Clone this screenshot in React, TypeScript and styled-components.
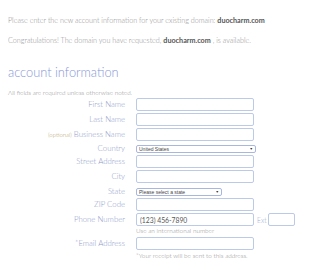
import React from "react";
import styled, { createGlobalStyle } from "styled-components";

const Global = createGlobalStyle`
  html, body { margin: 0; padding: 0; background: #ffffff; }
  body {
    font-family: Lato, "Noto Sans", sans-serif;
    -webkit-font-smoothing: antialiased;
  }
`;

const Page = styled.div`
  width: 320px;
  height: 269px;
  overflow: hidden;
  padding: 16px 0 0 8px;
  box-sizing: border-box;
`;

const Intro = styled.p`
  margin: 0 0 11px 0;
  font-size: 7.2px;
  font-weight: 300;
  line-height: 9px;
  color: #8f8f8f;
  white-space: nowrap;
  b { color: #555; font-weight: 700; }
`;

const Heading = styled.h2`
  margin: 19px 0 9px 0;
  font-weight: 300;
  font-size: 12.8px;
  line-height: 16px;
  color: #8797d8;
`;

const Note = styled.div`
  font-size: 6.35px;
  font-weight: 300;
  line-height: 7px;
  color: #8f8f8f;
  margin-bottom: 1px;
  white-space: nowrap;
`;

const Row = styled.div<{ $top?: number }>`
  display: flex;
  align-items: center;
  margin-top: ${(p) => p.$top ?? 2}px;
`;

const Label = styled.label`
  width: 117px;
  margin-right: 11px;
  text-align: right;
  font-size: 7.8px;
  font-weight: 300;
  line-height: 9px;
  color: #8e9cc9;
  white-space: nowrap;
`;

const Optional = styled.span`
  font-size: 6px;
  color: #b3a064;
  margin-right: 2px;
`;

const Input = styled.input<{ $w?: number }>`
  box-sizing: border-box;
  width: ${(p) => p.$w ?? 118}px;
  height: 13px;
  border: 1px solid #bccae8;
  border-radius: 2px;
  padding: 0 3px;
  margin: 0;
  font-family: Lato, sans-serif;
  font-size: 6.8px;
  color: #555;
  background: #fff;
  outline: none;
`;

const SelectWrap = styled.span<{ $w: number }>`
  position: relative;
  display: block;
  width: ${(p) => p.$w}px;
  height: 8px;
`;

const Select = styled.select`
  appearance: none;
  display: block;
  box-sizing: border-box;
  width: 100%;
  height: 8px;
  min-height: 0;
  border: 1px solid #a9b7de;
  border-radius: 2px;
  padding: 0 0 0 2px;
  margin: 0;
  font-family: "Liberation Sans", Arial, sans-serif;
  font-size: 5px;
  line-height: 6px;
  color: #444;
  background: #fff;
  outline: none;
`;

const Arrow = styled.span`
  position: absolute;
  right: 3px;
  top: 0;
  font-size: 3.5px;
  line-height: 8px;
  color: #333;
  pointer-events: none;
`;

const Ext = styled.span`
  margin: 0 2px 0 3px;
  font-size: 6.8px;
  font-weight: 300;
  color: #a0acd0;
`;

const Hint = styled.div<{ $top?: number }>`
  margin: ${(p) => p.$top ?? 1}px 0 0 128px;
  font-size: 6.4px;
  font-weight: 300;
  line-height: 8px;
  color: #8f8f8f;
  white-space: nowrap;
`;

function Field({ label, optional }: { label: string; optional?: boolean }) {
  return (
    <Row>
      <Label>
        {optional && <Optional>(optional)</Optional>}
        {label}
      </Label>
      <Input />
    </Row>
  );
}

export default function App() {
  return (
    <Page>
      <Global />
      <Intro>
        Please enter the new account information for your existing domain: <b>duocharm.com</b>
      </Intro>
      <Intro>
        Congratulations! The domain you have requested, <b>duocharm.com</b> , is available.
      </Intro>
      <Heading>account information</Heading>
      <Note>All fields are required unless otherwise noted.</Note>
      <Field label="First Name" />
      <Field label="Last Name" />
      <Field label="Business Name" optional />
      <Row $top={3}>
        <Label>Country</Label>
        <SelectWrap $w={120}>
          <Select defaultValue="US">
            <option value="US">United States</option>
          </Select>
          <Arrow>▼</Arrow>
        </SelectWrap>
      </Row>
      <Field label="Street Address" />
      <Field label="City" />
      <Row $top={4}>
        <Label>State</Label>
        <SelectWrap $w={86}>
          <Select defaultValue="">
            <option value="">Please select a state</option>
          </Select>
          <Arrow>▼</Arrow>
        </SelectWrap>
      </Row>
      <Field label="ZIP Code" />
      <Row>
        <Label>Phone Number</Label>
        <Input defaultValue="(123) 456-7890" />
        <Ext>Ext</Ext>
        <Input $w={27} />
      </Row>
      <Hint $top={1}>Use an international number</Hint>
      <Row $top={2}>
        <Label>*Email Address</Label>
        <Input />
      </Row>
      <Hint $top={2}>*Your receipt will be sent to this address.</Hint>
    </Page>
  );
}
